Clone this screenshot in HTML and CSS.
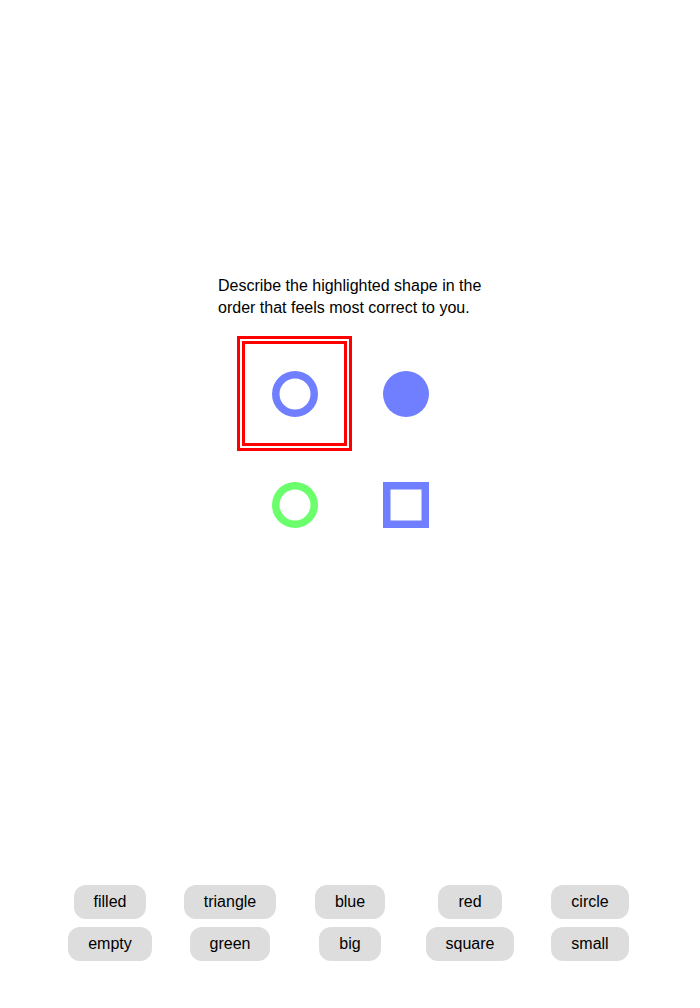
FILE: index.html
```html
<!DOCTYPE html>
<html lang="en">
<head>
<meta charset="utf-8">
<title>Describe the shape</title>
<link rel="stylesheet" href="styles.css">
</head>
<body>
<main class="page">
  <p class="prompt">Describe the highlighted shape in the order that feels most correct to you.</p>
  <div class="shapes">
    <div class="cell highlighted">
      <svg width="46" height="46" viewBox="0 0 46 46"><circle cx="23" cy="23" r="19.25" fill="none" stroke="#6f7fff" stroke-width="7.5"/></svg>
    </div>
    <div class="cell">
      <svg width="46" height="46" viewBox="0 0 46 46"><circle cx="23" cy="23" r="23" fill="#6f7fff"/></svg>
    </div>
    <div class="cell">
      <svg width="46" height="46" viewBox="0 0 46 46"><circle cx="23" cy="23" r="19.25" fill="none" stroke="#6bff6b" stroke-width="7.5"/></svg>
    </div>
    <div class="cell">
      <svg width="46" height="46" viewBox="0 0 46 46"><rect x="3.75" y="3.75" width="38.5" height="38.5" fill="none" stroke="#6f7fff" stroke-width="7.5"/></svg>
    </div>
  </div>
  <div class="words">
    <button class="word">filled</button>
    <button class="word">triangle</button>
    <button class="word">blue</button>
    <button class="word">red</button>
    <button class="word">circle</button>
    <button class="word">empty</button>
    <button class="word">green</button>
    <button class="word">big</button>
    <button class="word">square</button>
    <button class="word">small</button>
  </div>
</main>
</body>
</html>
```

FILE: styles.css
```css
html, body {
  margin: 0;
  padding: 0;
  background: #ffffff;
}

body {
  font-family: "Liberation Sans", Arial, sans-serif;
  font-size: 16px;
  color: #000000;
}

.page {
  height: 1008px;
  display: flex;
  flex-direction: column;
  align-items: center;
  box-sizing: border-box;
  padding-bottom: 47px;
}

.prompt {
  margin: 275px 0 0;
  width: 264px;
  line-height: 22px;
}

.shapes {
  margin-top: 19px;
  display: grid;
  grid-template-columns: 111px 111px;
  grid-auto-rows: 111px;
}

.cell {
  display: flex;
  align-items: center;
  justify-content: center;
}

.cell svg {
  display: block;
}

.highlighted {
  outline: 8px double #ff0000;
  outline-offset: -6px;
}

.words {
  margin-top: auto;
  display: grid;
  grid-template-columns: repeat(5, 120px);
  row-gap: 8px;
  justify-items: center;
}

.word {
  font-family: "Liberation Sans", Arial, sans-serif;
  font-size: 16px;
  line-height: 18px;
  color: #000000;
  background: #dddddd;
  border: none;
  border-radius: 12px;
  padding: 8px 20px;
  margin: 0;
}
```
